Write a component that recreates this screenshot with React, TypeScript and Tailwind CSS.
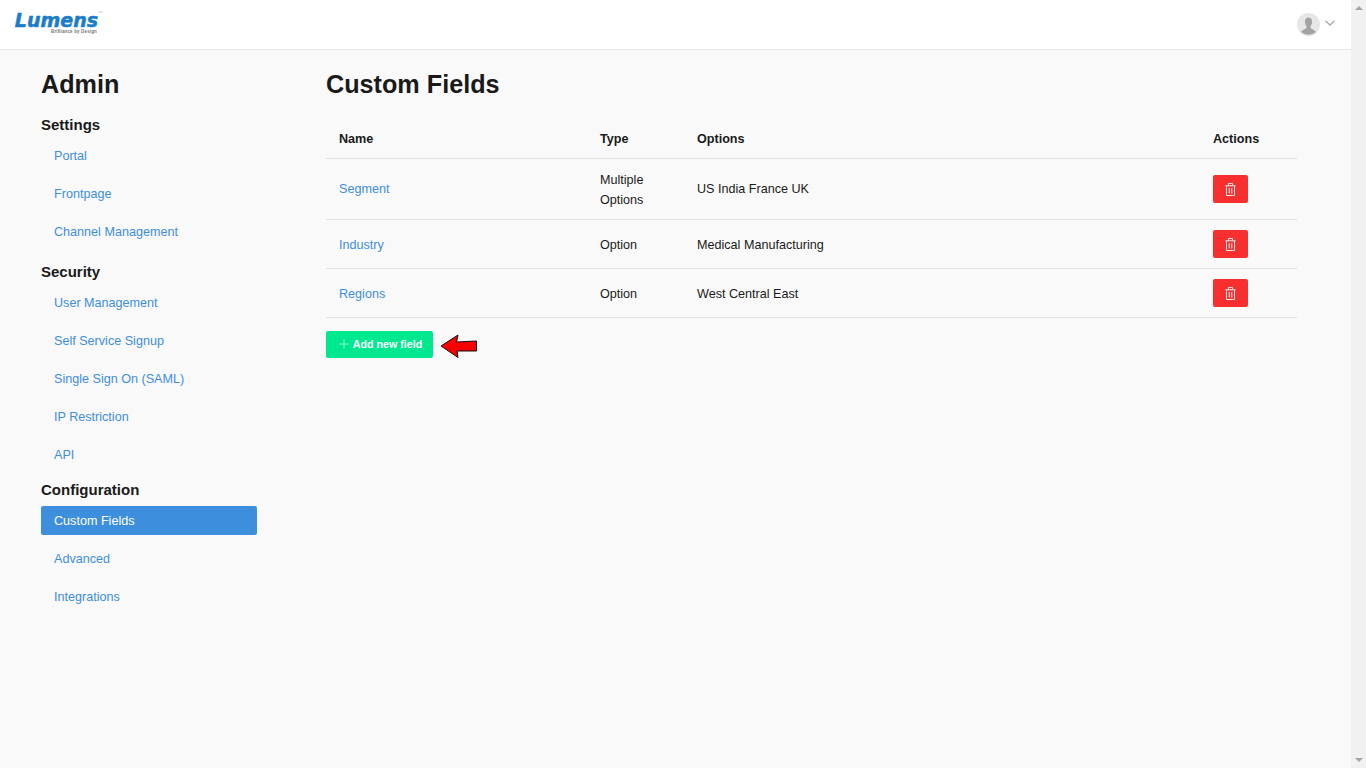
import { Plus } from "lucide-react"

const menus = [
  { title: "Settings", gap: "mb-[13px]", items: ["Portal", "Frontpage", "Channel Management"] },
  { title: "Security", gap: "mb-[8px]", items: ["User Management", "Self Service Signup", "Single Sign On (SAML)", "IP Restriction", "API"] },
  { title: "Configuration", gap: "mb-0", items: ["Custom Fields", "Advanced", "Integrations"] },
]

const fields = [
  { name: "Segment", type: "Multiple Options", options: "US India France UK", pad: "px-[13px] py-[10px]" },
  { name: "Industry", type: "Option", options: "Medical Manufacturing", pad: "px-[13px] pt-[11px] pb-[9px]" },
  { name: "Regions", type: "Option", options: "West Central East", pad: "px-[13px] pt-[11px] pb-[9px]" },
]

function Header() {
  return (
    <header className="h-[50px] shrink-0 bg-white border-b border-[#e6e6e6] flex items-center justify-between pl-[15px] pr-[16px]">
      <div className="flex flex-col items-end w-[87px] -mt-[5px]">
        <div className="flex items-start">
          <span className="text-[#1b7ccc] font-['DejaVu_Sans',sans-serif] font-bold italic text-[19px] leading-[18px] [-webkit-text-stroke:0.5px_#1b7ccc]">Lumens</span>
          <span className="text-[#9ab] text-[4px] leading-[4px]">™</span>
        </div>
        <span className="text-[#777] font-bold text-[4.500px] leading-[5px] tracking-[0.15px] pr-[5px]">Brilliance by Design</span>
      </div>
      <div className="flex items-center gap-[5px] -mt-[1px]">
        <svg width="23" height="23" viewBox="0 0 23 23">
          <circle cx="11.5" cy="11.5" r="11.5" fill="#e6e6e6" />
          <path d="M11.500 4.500c2.300 0 3.600 1.700 3.600 4.200 0 1.900-.8 3.300-1.600 4.300v1.700c0 1 3.700 1.800 5.500 4.200a11.500 11.500 0 0 1-15 0c1.800-2.400 5.500-3.200 5.500-4.200V13c-.8-1-1.600-2.400-1.600-4.300 0-2.500 1.300-4.200 3.600-4.200z" fill="#a3a3a3" />
        </svg>
        <svg width="10" height="6" viewBox="0 0 10 6" fill="none" stroke="#aaa" strokeWidth="1.300" className="-mt-[2px]">
          <path d="M.5 .8 L5 5 L9.500 .8" />
        </svg>
      </div>
    </header>
  )
}

function Sidebar() {
  return (
    <aside className="w-[326px] shrink-0 pl-[41px]">
      <h1 className="text-[25.200px] leading-[30px] font-bold text-[#1a1a1a]">Admin</h1>
      <div className="w-[216px] mt-[13px]">
        {menus.map((menu) => (
          <div key={menu.title} className={menu.gap}>
            <h2 className="text-[15px] leading-[26px] font-bold text-[#1a1a1a] mb-[3px]">{menu.title}</h2>
            <ul className="flex flex-col gap-[9px]">
              {menu.items.map((item) => (
                <li
                  key={item}
                  className={
                    item === "Custom Fields"
                      ? "h-[29px] px-[13px] pt-[2px] flex items-center rounded-[2px] text-[12.600px] bg-[#3e8ede] text-white"
                      : "h-[29px] px-[13px] pt-[2px] flex items-center text-[12.600px] text-[#3e8ede]"
                  }
                >
                  {item}
                </li>
              ))}
            </ul>
          </div>
        ))}
      </div>
    </aside>
  )
}

function TrashIcon() {
  return (
    <svg width="11" height="13" viewBox="0 0 11 13" fill="none" stroke="white" strokeWidth="0.900" className="mt-[1px]">
      <path d="M.5 2.800H10.500M3.500 2.800V.5H7.500V2.800" />
      <path d="M1.500 2.800V12.500H9.500V2.800" />
      <path d="M4.200 5.200V10.500M6.800 5.200V10.500" />
    </svg>
  )
}

function FieldsTable() {
  return (
    <table className="w-[971px] table-fixed mt-[19px] text-[12.600px] leading-[20px] text-[#1a1a1a] border-collapse">
      <thead>
        <tr className="border-b border-[#e2e2e2]">
          <th className="w-[261px] h-[40px] px-[13px] pt-[2px] text-left font-bold">Name</th>
          <th className="w-[97px] px-[13px] pt-[2px] text-left font-bold">Type</th>
          <th className="w-[516px] px-[13px] pt-[2px] text-left font-bold">Options</th>
          <th className="w-[97px] px-[13px] pt-[2px] text-left font-bold">Actions</th>
        </tr>
      </thead>
      <tbody>
        {fields.map((field) => (
          <tr key={field.name} className="border-b border-[#e2e2e2]">
            <td className={`h-[48px] text-[#3e8ede] ${field.pad}`}>{field.name}</td>
            <td className="px-[13px] pt-[11px] pb-[9px]">{field.type}</td>
            <td className={field.pad}>{field.options}</td>
            <td className="px-[13px] py-[10px]">
              <button className="w-[35px] h-[28px] flex items-center justify-center rounded-[2px] bg-[#f72f2f]">
                <TrashIcon />
              </button>
            </td>
          </tr>
        ))}
      </tbody>
    </table>
  )
}

export default function App() {
  return (
    <div className="h-screen flex overflow-hidden bg-[#f9f9f9] font-['Liberation_Sans',Arial,sans-serif]">
      <div className="flex-1 flex flex-col min-w-0">
        <Header />
        <div className="flex pt-[19px]">
          <Sidebar />
          <main>
            <h1 className="text-[25.200px] leading-[30px] font-bold text-[#1a1a1a]">Custom Fields</h1>
            <FieldsTable />
            <div className="flex items-start gap-[7px] mt-[13px]">
              <button className="w-[107px] h-[27px] flex items-center justify-center gap-[2px] rounded-[2px] bg-[#00e88f] text-white text-[10.700px] font-bold">
                <Plus size={14} strokeWidth={1.300} className="opacity-70" />
                Add new field
              </button>
              <svg width="38" height="25" viewBox="0 0 38 25" className="mt-[3px]">
                <path d="M1 12 L18 1 L16.500 8 L36.500 7 L36.500 17 L17 17 L18 23.500 Z" fill="#f60000" stroke="#111" strokeWidth="1" />
              </svg>
            </div>
          </main>
        </div>
      </div>
      <div className="w-[15px] shrink-0 bg-[#f1f1f1] flex flex-col justify-between items-center py-[6px]">
        <div className="w-0 h-0 border-x-[4px] border-x-transparent border-b-[4px] border-b-[#a3a3a3]" />
        <div className="w-0 h-0 border-x-[4px] border-x-transparent border-t-[4px] border-t-[#a3a3a3]" />
      </div>
    </div>
  )
}
